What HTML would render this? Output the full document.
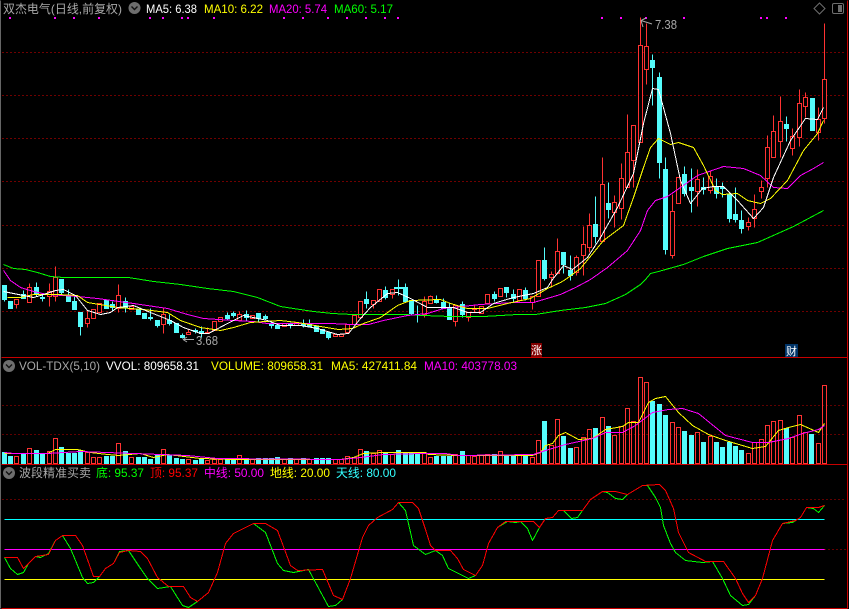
<!DOCTYPE html>
<html><head><meta charset="utf-8"><title>双杰电气</title>
<style>
html,body{margin:0;padding:0;background:#000;width:849px;height:609px;overflow:hidden}
svg{display:block}
text{font-family:"Liberation Sans","WenQuanYi Zen Hei","Noto Sans CJK SC",sans-serif;font-size:12px;white-space:pre}
</style></head><body>
<svg width="849" height="609" viewBox="0 0 849 609" xmlns="http://www.w3.org/2000/svg">
<rect width="849" height="609" fill="#000"/>
<g transform="translate(.5,.5)" shape-rendering="crispEdges" fill="none">
<path stroke="#e00000" stroke-dasharray="1 3" d="M2 52H846M2 95H846M2 138H846M2 181H846M2 225H846M2 268H846M2 311H846"/>
<path stroke="#c00000" stroke-dasharray="1 3" d="M2 405H846M2 434H846M2 499H846M824 549H846"/>
<path stroke="#666666" d="M0 0V608"/>
<path stroke="#c80000" d="M847 0V608M1 357H847M1 464H847M1 608H847"/>

<!-- main candles -->
<path stroke="#ff3232" d="M16 299V308M29 283V302M49 283V306M55 266V301M87 310V327M118 284V312M163 307V333M188 329V334M207 327V333M239 311V320M373 300V308M392 289V298M424 296V317M430 295V303M455 305V326M468 312V321M474 305V312M532 296V309M551 271V287M557 238V273M576 255V275M583 226V275M589 213V252M602 157V241M614 195V227M621 163V219M627 114V187M633 125V187M640 17V142M646 23V84M672 194V258M697 169V206M710 170V193M748 217V230M754 194V227M761 180V198M767 135V187M773 115V157M780 96V157M792 128V155M799 89V146M805 92V117M818 107V140M824 23V123"/>
<path stroke="#ff3232" fill="#000" d="M14 299H18V304H14ZM27 287H31V302H27ZM47 291H51V296H47ZM53 277H57V296H53ZM85 318H89V323H85ZM91 309H95V318H91ZM97 303H101V312H97ZM116 295H120V308H116ZM129 306H133V309H129ZM161 314H165V324H161ZM186 332H190V334H186ZM205 332H209V333H205ZM212 321H216V330H212ZM218 317H222V321H218ZM237 314H241V320H237ZM250 315H254V318H250ZM282 323H286V326H282ZM294 322H298V325H294ZM333 334H337V336H333ZM339 334H343V336H339ZM345 324H349V332H345ZM352 315H356V324H352ZM358 301H362V317H358ZM371 300H375V304H371ZM377 289H381V301H377ZM390 289H394V294H390ZM422 301H426V314H422ZM428 296H432V303H428ZM453 305H457V321H453ZM466 312H470V317H466ZM472 308H476V309H472ZM479 306H483V313H479ZM485 294H489V303H485ZM498 288H502V296H498ZM517 289H521V300H517ZM530 296H534V302H530ZM536 260H540V296H536ZM549 274H553V277H549ZM555 251H559V273H555ZM574 257H578V272H574ZM581 244H585V255H581ZM587 225H591V247H587ZM600 184H604V241H600ZM612 202H616V212H612ZM619 178H623V208H619ZM625 152H629V187H625ZM631 125H635V160H631ZM638 45H642V142H638ZM644 46H648V69H644ZM670 211H674V255H670ZM676 177H680V203H676ZM695 179H699V191H695ZM708 176H712V190H708ZM746 222H750V226H746ZM752 209H756V218H752ZM759 187H763V191H759ZM765 147H769V178H765ZM771 131H775V157H771ZM778 121H782V141H778ZM790 136H794V148H790ZM797 103H801V137H797ZM803 97H807V106H803ZM816 119H820V132H816ZM822 79H826V118H822Z"/>
<path stroke="#54fcfc" fill="#54fcfc" d="M4 285V301M2 285H6V299H2ZM8 301H12V308H8ZM23 290V298M21 294H25V298H21ZM36 282V296M34 287H38V294H34ZM42 295V301M40 297H44V298H40ZM61 279V294M59 279H63V292H59ZM68 289V301M66 295H70V301H66ZM74 294V309M72 301H76V309H72ZM80 312V335M78 312H82V326H78ZM106 300V308M104 300H108V308H104ZM112 301V310M110 304H114V307H110ZM125 297V312M123 301H127V307H123ZM138 308V314M136 309H140V314H136ZM144 313V318M142 313H146V318H142ZM150 308V320M148 317H152V318H148ZM157 320V327M155 320H159V325H155ZM169 314V325M167 320H171V323H167ZM176 323V332M174 323H178V332H174ZM182 333V338M180 335H184V337H180ZM195 328V333M193 330H197V331H193ZM201 326V337M199 331H203V333H199ZM227 312V319M225 315H229V318H225ZM233 311V317M231 313H235V315H231ZM246 310V320M244 314H248V317H244ZM258 313V322M256 313H260V318H256ZM265 314V319M263 316H267V318H263ZM271 321V328M269 323H273V325H269ZM277 325V328M275 325H279V328H275ZM290 322V328M288 324H292V325H288ZM303 319V327M301 324H305V325H301ZM309 319V327M307 323H311V326H307ZM316 326V331M314 326H318V331H314ZM322 329V333M320 329H324V333H320ZM328 332V339M326 332H330V337H326ZM366 291V308M364 299H368V303H364ZM385 286V299M383 290H387V297H383ZM398 279V295M394 287H402V288H394ZM405 283V301M403 287H407V301H403ZM411 300V315M409 300H413V313H409ZM417 305V322M436 295V303M434 300H438V302H434ZM443 298V308M441 302H445V308H441ZM449 302V319M447 308H451V319H447ZM462 301V317M460 304H464V314H460ZM494 291V301M492 294H496V298H492ZM506 287V297M504 287H508V292H504ZM513 289V302M511 294H515V298H511ZM525 287V300M523 290H527V298H523ZM544 247V280M542 260H546V278H542ZM563 252V273M561 252H565V264H561ZM570 255V280M568 270H572V275H568ZM595 196V243M593 224H597V236H593ZM608 182V218M606 203H610V209H606ZM652 54V105M650 60H654V67H650ZM659 72V178M657 77H661V162H657ZM665 157V254M663 169H667V249H663ZM684 166V196M682 174H686V193H682ZM691 168V212M689 187H693V190H689ZM703 177V194M701 187H705V189H701ZM716 178V198M714 186H718V193H714ZM722 182V197M720 187H724V188H720ZM729 192V222M727 194H731V218H727ZM735 187V222M733 214H737V219H733ZM741 210V233M739 220H743V228H739ZM786 116V141M784 124H788V128H784ZM810 98H814V130H810Z"/>

<!-- main MAs -->
<polyline stroke="#00ff00" points="3,264 13,268 25,269 37,272 50,276 63,277 83,277 128,277 153,281 180,284 207,288 233,291 257,297 280,306 293,308 313,311 332,313 352,314 403,314 423,315 450,316 483,316 517,314 535,314 560,310 585,307 605,303 625,294 640,284 645,279 650,273 658,271 683,264 703,256 727,248 757,242 793,226 823,210"/>
<polyline stroke="#ff00ff" points="3,270 10,280 20,287 33,291 47,294 77,296 97,298 133,303 167,308 187,314 203,318 233,320 253,321 267,323 280,323 330,323 352,324 368,324 383,320 407,315 427,313 443,308 480,304 513,302 533,302 560,294 575,287 590,279 607,267 627,250 640,230 647,210 655,200 667,196 680,187 697,175 723,166 743,168 760,175 773,187 787,188 800,175 813,168 823,162"/>
<polyline stroke="#ffff00" points="7,297 20,297 33,294 57,294 77,295 87,302 117,307 143,309 167,312 180,320 200,327 220,330 233,327 250,322 280,320 297,322 320,326 338,329 352,328 363,323 380,317 397,305 410,300 440,299 450,303 467,308 487,308 507,303 530,298 547,288 560,282 565,279 580,268 603,240 623,225 633,197 643,167 650,147 658,138 670,144 678,142 693,147 703,165 715,190 722,194 737,193 747,200 760,203 770,198 787,180 803,150 817,133 823,120"/>
<polyline stroke="#ffffff" points="3,291 13,293 33,297 40,295 55,290 63,289 75,295 87,310 100,314 110,312 117,307 133,305 150,312 170,320 183,327 200,333 208,333 227,323 243,315 267,320 280,325 300,325 317,328 337,334 348,333 360,318 370,307 387,293 397,292 410,298 427,307 453,307 467,312 480,312 493,303 513,297 533,293 547,287 552,279 563,265 572,269 587,257 600,237 617,207 633,173 643,123 652,88 658,89 670,133 680,180 690,203 702,188 713,186 723,186 737,200 753,218 763,207 773,177 790,140 805,118 817,119 823,107"/>

<!-- volume bars -->
<path stroke="#54fcfc" fill="#54fcfc" d="M2 463V452h4V463ZM8 463V456h4V463ZM21 463V454h4V463ZM34 463V450h4V463ZM40 463V454h4V463ZM59 463V447h4V463ZM66 463V453h4V463ZM72 463V453h4V463ZM78 463V450h4V463ZM104 463V456h4V463ZM110 463V456h4V463ZM123 463V451h4V463ZM136 463V457h4V463ZM142 463V457h4V463ZM148 463V459h4V463ZM155 463V454h4V463ZM167 463V455h4V463ZM174 463V458h4V463ZM180 463V459h4V463ZM193 463V460h4V463ZM199 463V459h4V463ZM225 463V458h4V463ZM231 463V459h4V463ZM244 463V458h4V463ZM256 463V458h4V463ZM263 463V458h4V463ZM269 463V458h4V463ZM275 463V457h4V463ZM288 463V458h4V463ZM301 463V458h4V463ZM314 463V458h4V463ZM320 463V458h4V463ZM326 463V458h4V463ZM364 463V451h4V463ZM383 463V453h4V463ZM396 463V450h4V463ZM403 463V452h4V463ZM409 463V453h4V463ZM415 463V453h4V463ZM434 463V456h4V463ZM441 463V456h4V463ZM447 463V456h4V463ZM460 463V451h4V463ZM492 463V454h4V463ZM504 463V456h4V463ZM511 463V456h4V463ZM523 463V455h4V463ZM542 463V421h4V463ZM561 463V436h4V463ZM568 463V448h4V463ZM593 463V428h4V463ZM606 463V426h4V463ZM650 463V401h4V463ZM657 463V404h4V463ZM663 463V415h4V463ZM682 463V431h4V463ZM689 463V435h4V463ZM701 463V442h4V463ZM714 463V442h4V463ZM720 463V447h4V463ZM727 463V442h4V463ZM733 463V446h4V463ZM739 463V450h4V463ZM784 463V428h4V463ZM809 463V434h4V463Z"/>
<path stroke="#ff3232" d="M14 463V456h4V463ZM27 463V448h4V463ZM47 463V451h4V463ZM53 463V438h4V463ZM85 463V452h4V463ZM91 463V457h4V463ZM97 463V457h4V463ZM116 463V443h4V463ZM129 463V457h4V463ZM161 463V449h4V463ZM186 463V459h4V463ZM205 463V460h4V463ZM212 463V459h4V463ZM218 463V459h4V463ZM237 463V455h4V463ZM250 463V459h4V463ZM282 463V459h4V463ZM294 463V459h4V463ZM307 463V459h4V463ZM333 463V459h4V463ZM339 463V459h4V463ZM345 463V456h4V463ZM352 463V457h4V463ZM358 463V449h4V463ZM371 463V453h4V463ZM377 463V450h4V463ZM390 463V454h4V463ZM422 463V453h4V463ZM428 463V457h4V463ZM453 463V454h4V463ZM466 463V455h4V463ZM472 463V456h4V463ZM479 463V455h4V463ZM485 463V454h4V463ZM498 463V451h4V463ZM517 463V454h4V463ZM530 463V457h4V463ZM536 463V440h4V463ZM549 463V445h4V463ZM555 463V419h4V463ZM574 463V447h4V463ZM581 463V437h4V463ZM587 463V429h4V463ZM600 463V417h4V463ZM612 463V435h4V463ZM619 463V426h4V463ZM625 463V408h4V463ZM631 463V421h4V463ZM638 463V377h4V463ZM644 463V382h4V463ZM670 463V422h4V463ZM676 463V427h4V463ZM695 463V432h4V463ZM708 463V436h4V463ZM746 463V453h4V463ZM752 463V442h4V463ZM759 463V439h4V463ZM765 463V425h4V463ZM771 463V421h4V463ZM778 463V420h4V463ZM790 463V437h4V463ZM797 463V415h4V463ZM803 463V432h4V463ZM816 463V443h4V463ZM822 463V385h4V463Z"/>
<polyline stroke="#ffff00" points="4,453 47,453 55,449 67,449 77,449 90,452 107,454 118,455 140,453 153,457 167,454 200,458 233,459 340,459 353,457 363,453 383,452 410,452 425,452 428,454 458,455 532,455 540,452 545,445 552,443 558,435 565,432 578,439 592,438 605,429 622,426 628,422 638,422 648,402 655,398 665,396 678,412 692,425 708,434 725,440 752,448 765,446 778,430 788,427 800,424 818,432 824,423"/>
<polyline stroke="#ff00ff" points="4,452 13,453 47,453 80,451 133,453 187,455 217,458 340,459 360,457 383,454 423,453 445,453 458,455 533,454 545,450 565,444 592,438 605,432 622,432 635,425 652,412 668,409 682,408 698,413 725,435 752,442 768,442 788,438 802,433 818,429 824,425"/>

<!-- indicator -->
<path stroke="#00ffff" d="M4 519H824"/>
<path stroke="#ff00ff" d="M4 549H824"/>
<path stroke="#ffff00" d="M4 579H824"/>
<polyline stroke="#00ff00" points="4,557 10,568 17,574 23,572 28,563 35,556 40,557 48,553 55,540 62,535 70,548 75,560 82,577 87,583 93,582 99,576 105,568 113,563 119,551 128,550 140,568 147,578 157,588 170,586 182,605 188,607 197,601 208,592 217,572 225,543 233,533 245,527 253,523 265,532 277,563 283,570 293,572 308,569 322,595 328,606 335,605 342,599 350,578 362,537 368,525 377,517 392,509 398,502 405,510 413,545 425,554 435,550 442,555 448,568 458,573 468,578 475,575 482,565 488,543 497,527 507,521 515,522 520,521 527,528 532,540 539,527 545,518 552,517 558,510 563,510 571,518 577,517 582,510 590,499 602,491 607,492 615,498 622,499 627,494 642,485 647,485 655,497 660,507 663,525 670,543 675,552 685,560 702,562 712,561 722,578 730,595 742,605 748,604 755,595 762,578 772,540 782,523 792,522 800,517 806,507 813,508 818,512 824,505"/>
<polyline stroke="#ff0000" points="4,557 17,557 23,568 35,556 48,554 55,540 62,535 75,535 82,545 93,576 99,576 105,568 113,563 119,552 128,550 140,551 147,558 157,577 168,586 183,586 190,597 197,601 208,592 217,572 225,543 233,533 245,527 253,523 265,523 277,530 290,565 297,570 322,569 333,595 342,599 350,578 362,537 368,525 377,517 392,509 398,502 412,502 418,508 425,529 430,545 435,550 450,550 457,558 463,569 475,575 482,565 488,543 497,527 505,521 533,521 539,527 545,518 552,517 558,510 582,510 590,499 602,491 615,491 627,494 642,485 659,484 665,490 673,508 678,532 688,552 705,561 723,561 735,578 742,593 748,602 755,595 762,578 772,540 782,523 795,520 800,517 806,507 818,507 824,505"/>

<!-- magenta markers -->
<path fill="#ff00ff" stroke="none" transform="translate(-.5,-.5)" d="M9 17h2v2h-2zM54 17h2v2h-2zM73 17h2v2h-2zM98 17h2v2h-2zM149 17h2v2h-2zM162 17h2v2h-2zM181 17h2v2h-2zM187 17h2v2h-2zM213 17h2v2h-2zM283 17h2v2h-2zM302 17h2v2h-2zM327 17h2v2h-2zM346 17h2v2h-2zM365 17h2v2h-2zM384 17h2v2h-2zM397 17h2v2h-2zM601 17h2v2h-2zM620 17h2v2h-2zM645 17h2v2h-2zM683 17h2v2h-2zM760 17h2v2h-2zM766 17h2v2h-2zM785 17h2v2h-2z"/>
</g>

<!-- extreme labels -->
<g fill="none" stroke="#a8a8a8">
<path d="M183 339.5H194M183 339.5L187 337M183 339.5L187 342"/>
<path d="M641 20.5L652 24M641 20.5L646 18M641 20.5L643 27"/>
</g>
<text x="196" y="345" fill="#a8a8a8" style="font-size:13px" textLength="22" lengthAdjust="spacingAndGlyphs">3.68</text>
<text x="655" y="29" fill="#a8a8a8" style="font-size:13px" textLength="22" lengthAdjust="spacingAndGlyphs">7.38</text>

<!-- header -->
<text x="3" y="13" fill="#a8a8a8" textLength="119" lengthAdjust="spacingAndGlyphs">双杰电气(日线,前复权)</text>
<circle cx="134.5" cy="8" r="6" fill="#6e6e6e"/><path d="M131.5 6.5L134.5 9.5L137.5 6.5" fill="none" stroke="#111" stroke-width="1.4"/>
<text x="146" y="13" fill="#fff" textLength="51" lengthAdjust="spacingAndGlyphs">MA5: 6.38</text>
<text x="204" y="13" fill="#ff0" textLength="59" lengthAdjust="spacingAndGlyphs">MA10: 6.22</text>
<text x="269" y="13" fill="#f0f" textLength="58" lengthAdjust="spacingAndGlyphs">MA20: 5.74</text>
<text x="334" y="13" fill="#0f0" textLength="59" lengthAdjust="spacingAndGlyphs">MA60: 5.17</text>

<!-- top-right icons -->
<path d="M819.5 3L825 8.5L819.5 14L814 8.5Z" fill="none" stroke="#6e6e6e"/>
<rect x="832.5" y="3.5" width="11" height="10" rx="1.5" fill="none" stroke="#6e6e6e"/>
<rect x="838" y="5" width="4" height="7" fill="#6e6e6e"/>

<!-- tags -->
<rect x="531" y="343" width="11" height="14" fill="#800000"/>
<text x="531" y="354" fill="#fff" style="font-size:11px">涨</text>
<rect x="785" y="344" width="13" height="13" fill="#003468"/>
<text x="786" y="355" fill="#fff" style="font-size:11px">财</text>

<!-- VOL header -->
<circle cx="9" cy="366" r="6" fill="#6e6e6e"/><path d="M6 364.5L9 367.5L12 364.5" fill="none" stroke="#111" stroke-width="1.4"/>
<text x="19" y="370" fill="#a8a8a8" textLength="81" lengthAdjust="spacingAndGlyphs">VOL-TDX(5,10)</text>
<text x="106" y="370" fill="#fff" textLength="93" lengthAdjust="spacingAndGlyphs">VVOL: 809658.31</text>
<text x="211" y="370" fill="#ff0" textLength="112" lengthAdjust="spacingAndGlyphs">VOLUME: 809658.31</text>
<text x="331" y="370" fill="#ff0" textLength="86" lengthAdjust="spacingAndGlyphs">MA5: 427411.84</text>
<text x="424" y="370" fill="#f0f" textLength="93" lengthAdjust="spacingAndGlyphs">MA10: 403778.03</text>

<!-- indicator header -->
<circle cx="9" cy="473" r="6" fill="#6e6e6e"/><path d="M6 471.5L9 474.5L12 471.5" fill="none" stroke="#111" stroke-width="1.4"/>
<text x="19" y="477" fill="#a8a8a8" textLength="72" lengthAdjust="spacingAndGlyphs">波段精准买卖</text>
<text x="96" y="477" fill="#0f0" textLength="48" lengthAdjust="spacingAndGlyphs">底: 95.37</text>
<text x="150" y="477" fill="#f00" textLength="48" lengthAdjust="spacingAndGlyphs">顶: 95.37</text>
<text x="204" y="477" fill="#f0f" textLength="60" lengthAdjust="spacingAndGlyphs">中线: 50.00</text>
<text x="270" y="477" fill="#ff0" textLength="60" lengthAdjust="spacingAndGlyphs">地线: 20.00</text>
<text x="336" y="477" fill="#3ff" textLength="60" lengthAdjust="spacingAndGlyphs">天线: 80.00</text>
</svg>
</body></html>
